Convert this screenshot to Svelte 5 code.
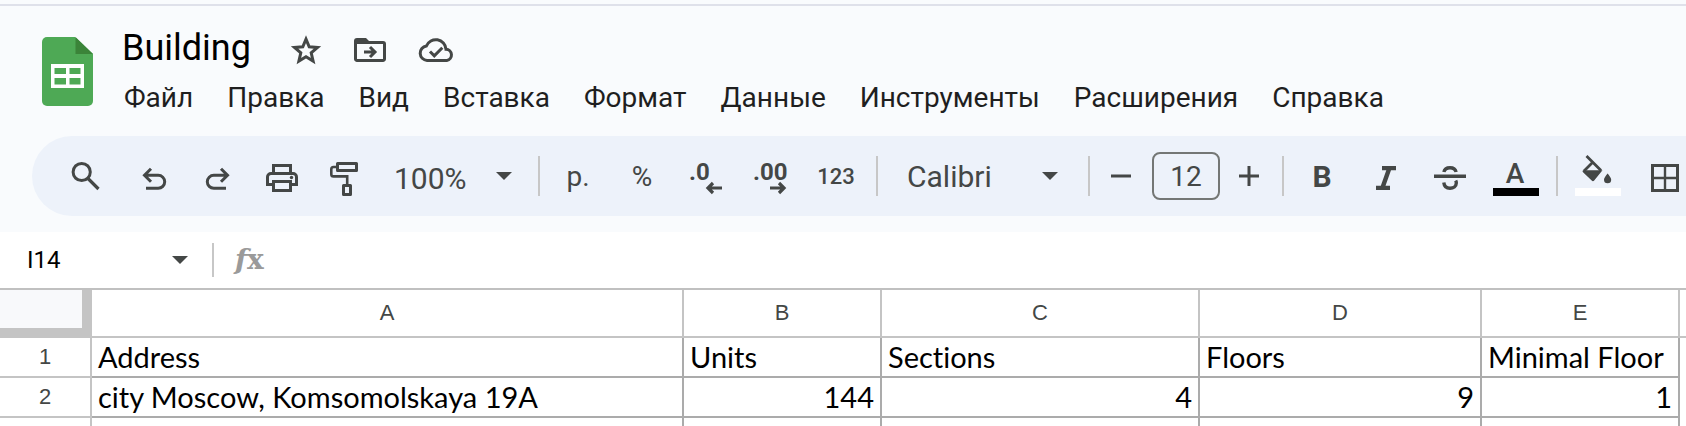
<script>
  const menus = ['Файл', 'Правка', 'Вид', 'Вставка', 'Формат', 'Данные', 'Инструменты', 'Расширения', 'Справка'];
  const columns = ['A', 'B', 'C', 'D', 'E'];
  const rows = [
    ['Address', 'Units', 'Sections', 'Floors', 'Minimal Floor'],
    ['city Moscow, Komsomolskaya 19A', 144, 4, 9, 1]
  ];
</script>

{#snippet caret()}
  <svg class="caret" width="16" height="8" viewBox="0 0 16 8" aria-hidden="true"><path d="M0 0h16L8 8z" /></svg>
{/snippet}

<div class="app">
  <header>
    <svg class="logo" width="51" height="69" viewBox="0 0 51 69" aria-hidden="true">
      <path fill="#4ea955" d="M5 0h28l18 17v47a5 5 0 0 1-5 5H5a5 5 0 0 1-5-5V5a5 5 0 0 1 5-5z" />
      <path fill="#3b8439" d="M33.500 0v17H51z" />
      <path fill="#fff" fill-rule="evenodd" d="M9 27h33v24H9zM12.500 31v6H24v-6zM27.500 31v6H38.500v-6zM12.500 41v6.500H24V41zM27.500 41v6.500H38.500V41z" />
    </svg>
    <div class="heading">
      <div class="title-row">
        <h1>Building</h1>
        <button class="mini" aria-label="Пометить">
          <svg width="32" height="32" viewBox="0 0 32 32"><path class="line" stroke-width="3" d="M16 5.200l3.200 7.600 8.300.7-6.300 5.400 1.900 8.100L16 22.700 8.900 27l1.900-8.100-6.300-5.400 8.300-.7z" /></svg>
        </button>
        <button class="mini" aria-label="Переместить">
          <svg width="32" height="32" viewBox="0 0 32 32"><path class="line" stroke-width="3" d="M1.500 8v17a1.500 1.500 0 0 0 1.500 1.500h26a1.500 1.500 0 0 0 1.500-1.500V10A1.500 1.500 0 0 0 29 8.500H3M10 18h10M16 13l5 5-5 5" /><path d="M0 9.500V7a3 3 0 0 1 3-3h9l4 4v1.500z" /></svg>
        </button>
        <button class="mini" aria-label="Состояние документа">
          <svg width="36" height="32" viewBox="0 0 36 32"><path class="line" stroke-width="3" d="M9 26.500a7.300 7.300 0 0 1-.6-14.500A10.200 10.200 0 0 1 28 15.200a5.700 5.700 0 0 1 .8 11.300zM12 17.500l4.300 4.300 8-8" /></svg>
        </button>
      </div>
      <nav>
        {#each menus as name}<button>{name}</button>{/each}
      </nav>
    </div>
  </header>

  <div class="toolbar" role="toolbar" aria-label="Панель инструментов">
    <button class="tool search" aria-label="Поиск">
      <svg width="40" height="40" viewBox="0 0 40 40"><circle class="line" cx="15.700" cy="16" r="8.600" stroke-width="3" /><path class="line" stroke-width="3.200" d="M21.500 22l11 11" /></svg>
    </button>
    <button class="tool" aria-label="Отменить">
      <svg width="40" height="40" viewBox="0 0 40 40"><path class="line" stroke-width="3" d="M12 32.300h12.200a6.500 6.500 0 0 0 0-13H10.500M17 12.800l-6.500 6.500 6.500 6.500" /></svg>
    </button>
    <button class="tool" aria-label="Повторить">
      <svg width="40" height="40" viewBox="0 0 40 40"><path class="line" stroke-width="3" d="M28 32.300H15.800a6.500 6.500 0 0 1 0-13h13.700M23 12.800l6.500 6.500-6.500 6.500" /></svg>
    </button>
    <button class="tool" aria-label="Печать">
      <svg width="40" height="40" viewBox="0 0 40 40"><path class="line" stroke-width="3" d="M11.500 17V9.500h17V17M11.500 28.500h-6V21A3.500 3.500 0 0 1 9 17.500h22a3.500 3.500 0 0 1 3.500 3.500v7.500h-6M11.500 25.500h17v9h-17z" /><circle cx="29.500" cy="21.500" r="1.700" /></svg>
    </button>
    <button class="tool" aria-label="Копировать форматирование">
      <svg width="40" height="40" viewBox="0 0 40 40"><path class="line" stroke-width="3" stroke-linejoin="round" d="M11.500 7.500h19v7h-19zM17.500 29.500h7v9h-7z" /><path class="line" stroke-width="2.600" d="M10 11H7.500A2.200 2.200 0 0 0 5.300 13.200v5A2.200 2.200 0 0 0 7.500 20.400H21.200V28" /></svg>
    </button>
    <label class="drop zoom">
      <select aria-label="Масштаб"><option>100%</option></select>
      {@render caret()}
    </label>
    <span class="sep"></span>
    <button class="tool" aria-label="Денежный формат">р.</button>
    <button class="tool" aria-label="Процентный формат">%</button>
    <button class="tool" aria-label="Меньше знаков после запятой">
      <svg width="40" height="40" viewBox="0 0 40 40"><text x="3" y="24">.0</text><path class="line" stroke-width="3.200" d="M36 32H22.500M27 27l-5 5 5 5" /></svg>
    </button>
    <button class="tool" aria-label="Больше знаков после запятой">
      <svg width="40" height="40" viewBox="0 0 40 40"><text x="3" y="24">.00</text><path class="line" stroke-width="3.200" d="M20 32h13.500M29 27l5 5-5 5" /></svg>
    </button>
    <button class="tool wide formats" aria-label="Другие форматы">123</button>
    <span class="sep"></span>
    <label class="drop font">
      <select aria-label="Шрифт"><option>Calibri</option></select>
      {@render caret()}
    </label>
    <span class="sep"></span>
    <button class="tool minus" aria-label="Уменьшить размер шрифта">
      <svg width="20" height="20" viewBox="0 0 20 20"><path class="line" stroke-width="3" d="M0 10h20" /></svg>
    </button>
    <input class="size" aria-label="Размер шрифта" value="12" />
    <button class="tool plus" aria-label="Увеличить размер шрифта">
      <svg width="20" height="20" viewBox="0 0 20 20"><path class="line" stroke-width="3" d="M0 10h20M10 0v20" /></svg>
    </button>
    <span class="sep after-size"></span>
    <button class="tool bold" aria-label="Полужирный">B</button>
    <button class="tool" aria-label="Курсив">
      <svg width="40" height="40" viewBox="0 0 40 40"><path d="M16 10h14v4.200h-5L19.500 29.800H24V34H10v-4.200h4.800L20.300 14.200H16z" /></svg>
    </button>
    <button class="tool" aria-label="Зачеркнутый">
      <svg width="40" height="40" viewBox="0 0 40 40"><path class="line" stroke-width="3.400" d="M4 20.300h32M13.900 16c.5-2.600 2.800-4.300 6.100-4.300s5.500 1.500 6.100 4.300M13.800 26.500c.4 3.600 2.900 5.800 6.200 5.800s6.300-2 6.300-5.300c0-.9-.2-1.700-.6-2.500" /></svg>
    </button>
    <button class="tool wide" aria-label="Цвет текста">
      <svg width="48" height="40" viewBox="0 0 48 40"><text class="letter" x="23" y="27">A</text><path fill="#000" d="M1 32h46v8H1z" /></svg>
    </button>
    <span class="sep"></span>
    <button class="tool wide" aria-label="Цвет заливки">
      <svg width="48" height="40" viewBox="0 0 48 40"><path d="M9 14.200h19.500L20.200 24.500a1.700 1.700 0 0 1-2.500 0L9 16.200a1.400 1.400 0 0 1 0-2z" /><path class="line" stroke-width="2.800" d="M12.500 0l14.500 14.500M18.500 6.500l-8.500 8.500" /><path d="M33.600 17.500c1.600 2.200 3.600 4.200 3.600 6.200a3.600 3.600 0 0 1-7.200 0c0-2 2-4 3.600-6.200z" /><path fill="#fff" d="M1 32h46v8H1z" /></svg>
    </button>
    <button class="tool" aria-label="Границы">
      <svg width="40" height="40" viewBox="0 0 40 40"><path class="line" stroke-width="3" d="M8.500 9.500h25v25h-25z" /><path class="line" stroke-width="2.400" d="M21 9v26M8 22h26" /></svg>
    </button>
  </div>

  <div class="formula">
    <input class="cell-name" aria-label="Имя ячейки" value="I14" />
    {@render caret()}
    <span class="divider"></span>
    <span class="fx"><i>f</i>x</span>
  </div>

  <div class="sheet">
    <table>
      <colgroup>
        <col class="c0" /><col class="ca" /><col class="cb" /><col class="cc" /><col class="cd" /><col class="cb" /><col />
      </colgroup>
      <thead>
        <tr>
          <td class="corner"></td>
          {#each columns as c}<th scope="col">{c}</th>{/each}
          <td class="rest"></td>
        </tr>
      </thead>
      <tbody>
        {#each rows as row, i}
          <tr>
            <th scope="row">{i + 1}</th>
            {#each row as v}<td class:num={typeof v === 'number'}>{v}</td>{/each}
            <td class="blank"></td>
          </tr>
        {/each}
        <tr>
          <th></th>
          {#each columns as _}<td></td>{/each}
          <td class="blank"></td>
        </tr>
      </tbody>
    </table>
  </div>
</div>

<style>
  :global(body) {
    margin: 0;
    background: #f9fbfd;
  }
  .app {
    display: flex;
    flex-direction: column;
    height: 100vh;
    overflow: hidden;
    font-family: Roboto, 'Noto Sans', sans-serif;
    color: #444746;
  }
  button, select, input {
    border: 0;
    margin: 0;
    padding: 0;
    background: none;
    color: inherit;
    font: inherit;
  }
  svg {
    display: block;
    flex: none;
    overflow: visible;
    fill: #444746;
  }
  .line {
    fill: none;
    stroke: #444746;
  }
  header {
    display: flex;
    flex: none;
    margin-top: 4px;
    border-top: 2px solid #dfe1ea;
    height: 130px;
    box-sizing: border-box;
    padding-left: 42px;
  }
  .logo {
    margin-top: 31px;
  }
  .heading {
    padding: 20px 0 0 29px;
  }
  .title-row {
    display: flex;
    align-items: center;
    height: 44px;
  }
  h1 {
    margin: 0 39px 0 0;
    font-size: 36px;
    line-height: 44px;
    font-weight: 400;
    color: #000;
  }
  .mini {
    margin-right: 32px;
    padding-top: 4px;
  }
  nav {
    display: flex;
    gap: 34px;
    margin-top: 8px;
    padding-left: 2px;
  }
  nav button {
    font-size: 28px;
    line-height: 40px;
    color: #1f1f1f;
    white-space: nowrap;
  }
  .toolbar {
    display: flex;
    flex: none;
    align-items: center;
    height: 80px;
    margin: 2px 0 16px 32px;
    padding-left: 22px;
    border-radius: 40px 0 0 40px;
    background: #edf2fa;
    overflow: hidden;
  }
  .tool {
    display: flex;
    flex: none;
    align-items: center;
    justify-content: center;
    width: 64px;
    height: 64px;
    font-size: 28px;
  }
  .search { margin-right: 4px; }
  .wide { width: 68px; }
  .minus { width: 50px; }
  .plus { width: 46px; }
  .formats { font-size: 22px; font-weight: 500; }
  .bold { font-size: 30px; font-weight: 700; }
  text {
    font-size: 24px;
    font-weight: 700;
  }
  .letter {
    font-size: 28px;
    font-weight: 500;
    text-anchor: middle;
  }
  .sep {
    flex: none;
    width: 2px;
    height: 40px;
    margin: 0 6px;
    background: #c7c7c7;
  }
  .after-size { margin-left: 10px; }
  .drop {
    display: grid;
    flex: none;
    align-items: center;
    font-size: 30px;
  }
  .drop > :global(*) { grid-area: 1 / 1; }
  .drop select {
    appearance: none;
    height: 64px;
    width: 100%;
  }
  .drop .caret {
    justify-self: end;
    pointer-events: none;
  }
  .zoom { width: 146px; margin-left: 8px; }
  .zoom select { padding: 4px 0 0 8px; }
  .zoom .caret { margin-right: 20px; }
  .font { width: 198px; }
  .font select { padding-left: 23px; }
  .font .caret { margin-right: 24px; }
  .size {
    flex: none;
    width: 68px;
    height: 48px;
    box-sizing: border-box;
    margin: 0 6px;
    border: 2px solid #747775;
    border-radius: 8px;
    text-align: center;
    font-size: 28px;
  }
  .formula {
    display: flex;
    flex: none;
    align-items: center;
    height: 56px;
    padding-left: 27px;
    background: #fff;
    border-bottom: 2px solid #c0c0c0;
  }
  .cell-name {
    width: 145px;
    font-size: 24px;
    color: #000;
  }
  .divider {
    width: 2px;
    height: 34px;
    margin: 0 21px 0 24px;
    background: #c7c7c7;
  }
  .fx {
    font-family: 'DejaVu Serif', serif;
    font-size: 28px;
    line-height: 32px;
    font-weight: 700;
    color: #9a9a9a;
  }
  .sheet {
    flex: 1;
    min-height: 0;
    overflow: hidden;
    background: #fff;
  }
  table {
    width: 100%;
    table-layout: fixed;
    border-collapse: separate;
    border-spacing: 0;
  }
  .c0 { width: 92px; }
  .ca { width: 592px; }
  .cb { width: 198px; }
  .cc { width: 318px; }
  .cd { width: 282px; }
  th, td {
    box-sizing: border-box;
    height: 40px;
    padding: 0 6px;
    border-right: 2px solid #ababab;
    border-bottom: 2px solid #ababab;
    white-space: nowrap;
    text-align: left;
  }
  td {
    font-family: Lato, 'Noto Sans', sans-serif;
    font-size: 29px;
    line-height: 36px;
    font-variant-ligatures: none;
    color: #000;
  }
  th {
    border-color: #c4c4c4;
    text-align: center;
    font-family: 'Liberation Sans', sans-serif;
    font-size: 22px;
    line-height: 24px;
    font-weight: 400;
  }
  thead th, thead td {
    height: 48px;
    border-color: #c4c4c4;
  }
  .corner {
    background: #f8f9fb;
    border-right: 10px solid #c4c4c4;
    border-bottom: 10px solid #c4c4c4;
  }
  .num { text-align: right; }
  .rest { padding: 0; border-right: 0; }
  .blank { padding: 0; border: 0; }
</style>
